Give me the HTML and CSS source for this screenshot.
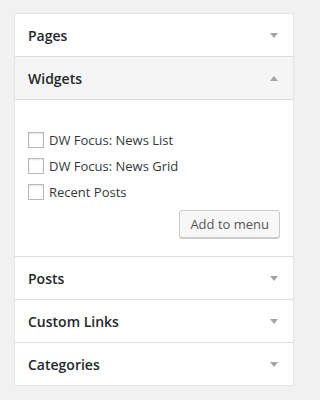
FILE: index.html
```html
<!DOCTYPE html>
<html lang="en">
<head>
<meta charset="utf-8">
<title>Menu items</title>
<link rel="stylesheet" href="styles.css">
</head>
<body>
<div class="accordion">
  <div class="section">
    <div class="title"><span>Pages</span><svg class="arrow" width="8" height="5" viewBox="0 0 8 5"><polygon points="0,0 8,0 4,5"/></svg></div>
  </div>
  <div class="section open">
    <div class="title"><span>Widgets</span><svg class="arrow" width="8" height="5" viewBox="0 0 8 5"><polygon points="0,5 8,5 4,0"/></svg></div>
    <div class="content">
      <ul class="checklist">
        <li><label><span class="box"></span>DW Focus: News List</label></li>
        <li><label><span class="box"></span>DW Focus: News Grid</label></li>
        <li><label><span class="box"></span>Recent Posts</label></li>
      </ul>
      <div class="actions"><button class="button">Add to menu</button></div>
    </div>
  </div>
  <div class="section">
    <div class="title"><span>Posts</span><svg class="arrow" width="8" height="5" viewBox="0 0 8 5"><polygon points="0,0 8,0 4,5"/></svg></div>
  </div>
  <div class="section">
    <div class="title"><span>Custom Links</span><svg class="arrow" width="8" height="5" viewBox="0 0 8 5"><polygon points="0,0 8,0 4,5"/></svg></div>
  </div>
  <div class="section last">
    <div class="title"><span>Categories</span><svg class="arrow" width="8" height="5" viewBox="0 0 8 5"><polygon points="0,0 8,0 4,5"/></svg></div>
  </div>
</div>
</body>
</html>
```

FILE: styles.css
```css
html, body {
  margin: 0;
  padding: 0;
  background: #f1f1f1;
}
body {
  font-family: "Open Sans", "Noto Sans", sans-serif;
  color: #23282d;
  padding: 13px 12px 0 14px;
}
.accordion {
  width: 278px;
  background: #fff;
  border: 1px solid #e5e5e5;
  box-shadow: 0 1px 1px rgba(0, 0, 0, 0.04);
}
.section {
  border-bottom: 1px solid #ddd;
}
.section.last {
  border-bottom: none;
}
.title {
  height: 42px;
  display: flex;
  align-items: center;
  justify-content: space-between;
  padding: 0 15px 0 13px;
  font-size: 14px;
  font-weight: 600;
  line-height: 21px;
  background: #fff;
}
.title span {
  position: relative;
  top: 0px;
}
.open .title {
  background: #f5f5f5;
  border-bottom: 1px solid #ddd;
}
.arrow {
  fill: #a0a5aa;
  display: block;
}
.content {
  padding: 32px 13px 18px 13px;
}
.checklist {
  list-style: none;
  margin: 0;
  padding: 0;
}
.checklist li {
  height: 16px;
  margin: 0 0 10px 0;
}
.checklist label {
  display: flex;
  align-items: center;
  height: 16px;
  font-size: 13px;
  color: #32373c;
  line-height: 16px;
}
.box {
  width: 14px;
  height: 14px;
  border: 1px solid #b4b9be;
  background: #fff;
  box-shadow: inset 0 1px 2px rgba(0, 0, 0, 0.1);
  margin-right: 5px;
  flex: none;
}
.actions {
  display: flex;
  justify-content: flex-end;
}
.button {
  height: 28px;
  padding: 0 10px 1px;
  font-family: "Open Sans", "Noto Sans", sans-serif;
  font-size: 13px;
  line-height: 26px;
  color: #555;
  background: #f7f7f7;
  border: 1px solid #ccc;
  border-radius: 3px;
  box-shadow: 0 1px 0 #ccc;
  box-sizing: border-box;
}
```
